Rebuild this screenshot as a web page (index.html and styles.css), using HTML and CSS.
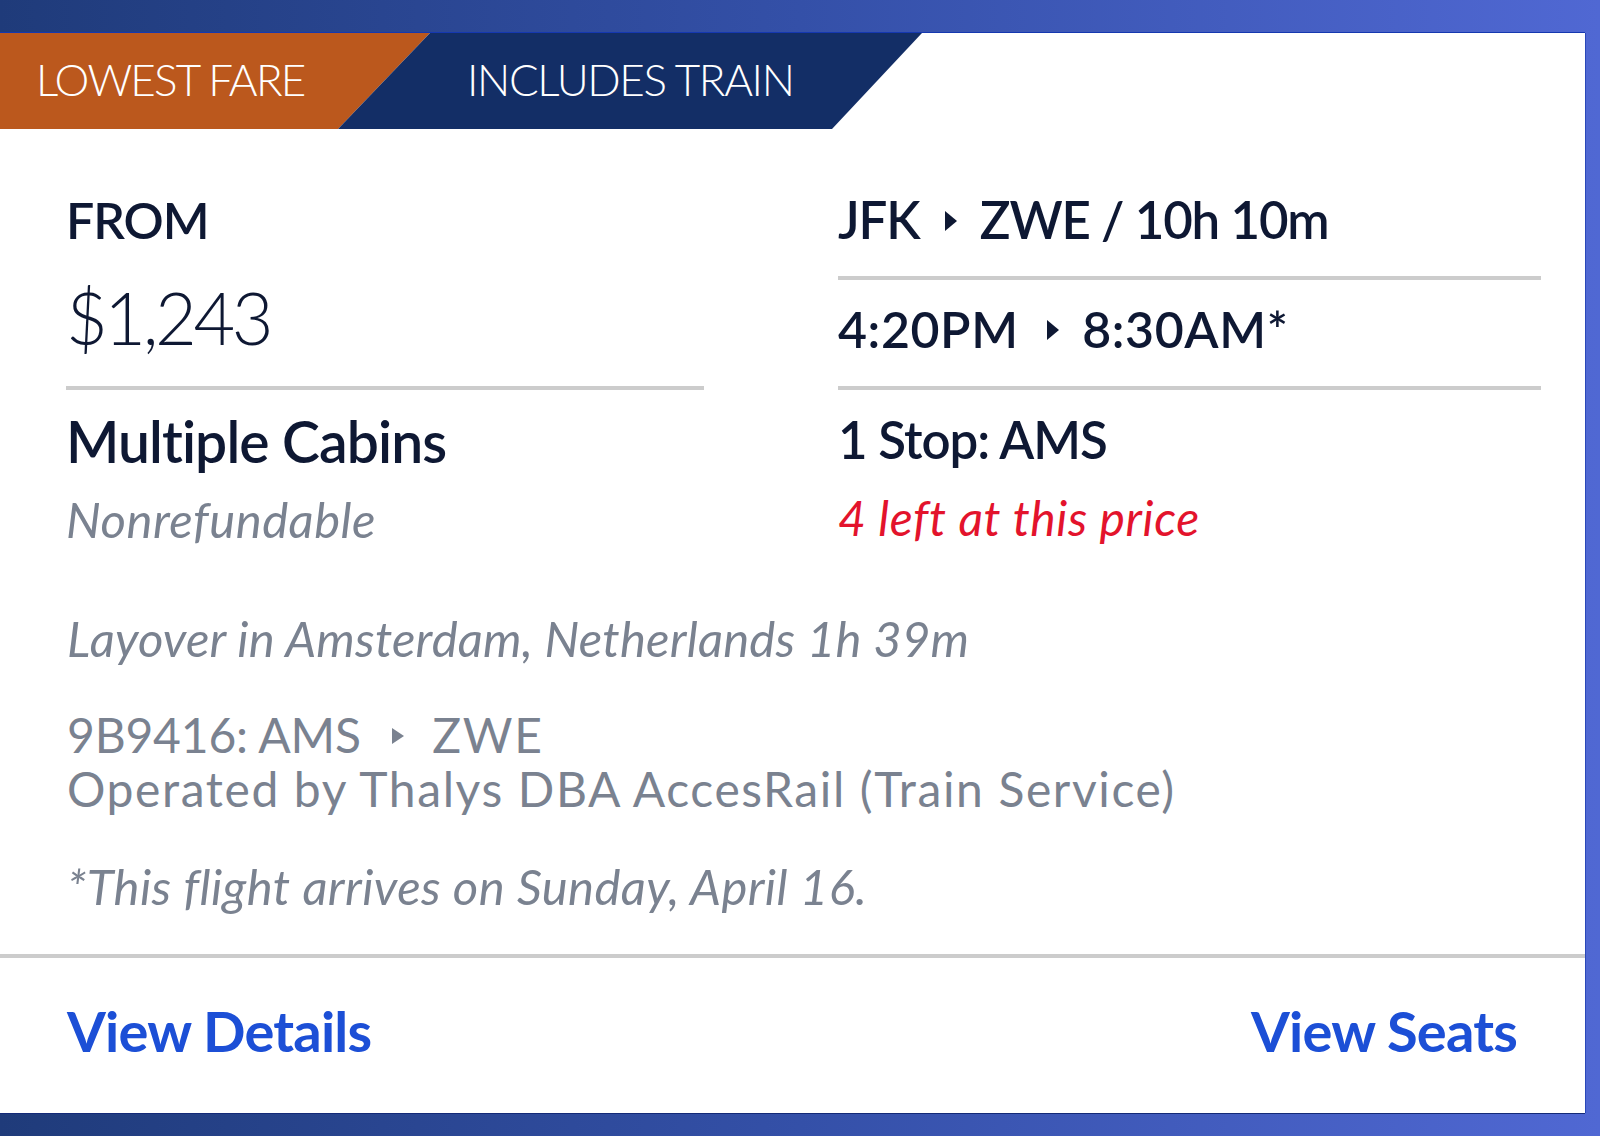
FILE: index.html
```html
<!DOCTYPE html>
<html lang="en">
<head>
<meta charset="utf-8">
<title>Fare card</title>
<link rel="stylesheet" href="styles.css">
</head>
<body>
<div class="card">
  <div class="tags">
    <div class="tag tag-fare">LOWEST FARE</div>
    <div class="tag tag-train">INCLUDES TRAIN</div>
  </div>
  <div class="summary">
    <div class="col">
      <div class="label">FROM</div>
      <div class="price">$1,243</div>
      <div class="rule rule-price"></div>
      <div class="cabin">Multiple Cabins</div>
      <div class="fare-note">Nonrefundable</div>
    </div>
    <div class="col">
      <div class="route">JFK<span class="arrow"></span>ZWE / 10h 10m</div>
      <div class="rule rule-route"></div>
      <div class="times">4:20PM<span class="arrow"></span>8:30AM*</div>
      <div class="rule rule-times"></div>
      <div class="stops">1 Stop: AMS</div>
      <div class="seats-left">4 left at this price</div>
    </div>
  </div>
  <div class="details">
    <p class="layover">Layover in Amsterdam, Netherlands 1h 39m</p>
    <p class="segment"><span class="flight-no">9B9416: AMS</span><span class="arrow arrow-small"></span>ZWE<br>Operated by Thalys DBA AccesRail (Train Service)</p>
    <p class="arrival">*This flight arrives on Sunday, April 16.</p>
  </div>
  <div class="actions">
    <a class="action" href="#">View Details</a>
    <a class="action" href="#">View Seats</a>
  </div>
</div>
</body>
</html>
```

FILE: styles.css
```css
html, body {
  margin: 0;
  padding: 0;
}

body {
  width: 1600px;
  height: 1136px;
  overflow: hidden;
  background: linear-gradient(90deg, #1f3b7a 0%, #3450a8 50%, #5068d3 100%);
  font-family: "Lato", "Open Sans", "Liberation Sans", sans-serif;
  color: #0e1833;
}

.card {
  margin-top: 33px;
  width: 1585px;
  height: 1080px;
  background: #ffffff;
  display: flex;
  flex-direction: column;
  box-shadow: 0 -1px 0 #1538b0, 1px 0 0 #2a48b8, 0 1px 0 #142a78;
}

.tags {
  display: flex;
  height: 96px;
}

.tag {
  height: 96px;
  line-height: 93px;
  font-size: 44px;
  font-weight: 300;
  letter-spacing: -1.4px;
  color: #ffffff;
  white-space: nowrap;
}

.tag-fare {
  width: 430px;
  padding-left: 36px;
  box-sizing: border-box;
  letter-spacing: -1.8px;
  background: #bb581d;
  clip-path: polygon(0 0, 100% 0, calc(100% - 92px) 100%, 0 100%);
}

.tag-train {
  width: 584px;
  margin-left: -92px;
  padding-left: 129px;
  box-sizing: border-box;
  background: #132e66;
  clip-path: polygon(92px 0, 100% 0, calc(100% - 90px) 100%, 0 100%);
}

.summary {
  display: grid;
  grid-template-columns: 638px 703px;
  column-gap: 134px;
  padding: 61px 44px 0 66px;
}

.col {
  display: flex;
  flex-direction: column;
}

.rule {
  height: 4px;
  background: #cccccc;
}

.label {
  font-size: 50px;
  font-weight: 600;
  line-height: 60px;
  letter-spacing: -1px;
}

.price {
  margin-top: 27px;
  font-size: 72px;
  font-weight: 300;
  line-height: 80px;
  letter-spacing: -3.4px;
}

.rule-price { margin-top: 29px; }

.cabin {
  margin-top: 16px;
  font-size: 57px;
  font-weight: 600;
  line-height: 70px;
  letter-spacing: -0.9px;
}

.fare-note {
  margin-top: 10px;
  font-size: 49px;
  font-style: italic;
  line-height: 66px;
  letter-spacing: 0.5px;
  color: #7a8290;
}

.route {
  font-size: 51px;
  font-weight: 600;
  line-height: 60px;
  letter-spacing: -1.2px;
  white-space: nowrap;
}

.route .arrow {
  margin-left: 0.5em;
  margin-right: 0.45em;
}

.rule-route { margin-top: 26px; }

.times {
  margin-top: 19px;
  font-size: 50px;
  font-weight: 600;
  line-height: 60px;
  letter-spacing: 0.6px;
  white-space: nowrap;
}

.rule-times { margin-top: 27px; }

.stops {
  margin-top: 15px;
  font-size: 51px;
  font-weight: 600;
  line-height: 70px;
  letter-spacing: -1px;
}

.seats-left {
  margin-top: 10px;
  font-size: 48px;
  font-style: italic;
  line-height: 66px;
  letter-spacing: 0.6px;
  color: #e3132c;
}

.arrow {
  display: inline-block;
  width: 0;
  height: 0;
  border-left: 0.24em solid currentColor;
  border-top: 0.2em solid transparent;
  border-bottom: 0.2em solid transparent;
  margin: 0 0.47em 0 0.56em;
  vertical-align: 0.16em;
}

.arrow-small {
  border-left-width: 0.25em;
  border-top-width: 0.17em;
  border-bottom-width: 0.17em;
  margin: 0 0.6em 0 0.64em;
  vertical-align: 0.19em;
}

.details {
  padding: 0 20px 0 67px;
  margin-top: 53px;
  color: #7a8290;
}

.details p {
  margin: 0;
}

.layover {
  font-size: 49px;
  font-style: italic;
  line-height: 66px;
  letter-spacing: 0.2px;
}

.segment {
  margin-top: 37px !important;
  font-size: 48px;
  line-height: 54px;
  letter-spacing: 1.6px;
  white-space: nowrap;
}

.flight-no {
  letter-spacing: -0.2px;
}

.arrival {
  margin-top: 37px !important;
  font-size: 49px;
  font-style: italic;
  line-height: 66px;
  letter-spacing: 0.4px;
}

.actions {
  margin-top: auto;
  box-sizing: border-box;
  height: 159px;
  border-top: 4px solid #cccccc;
  display: flex;
  justify-content: space-between;
  align-items: center;
  padding: 0 68px 10px 67px;
}

.action {
  font-size: 56px;
  font-weight: 700;
  letter-spacing: -0.8px;
  color: #1c4fd6;
  text-decoration: none;
}
```
